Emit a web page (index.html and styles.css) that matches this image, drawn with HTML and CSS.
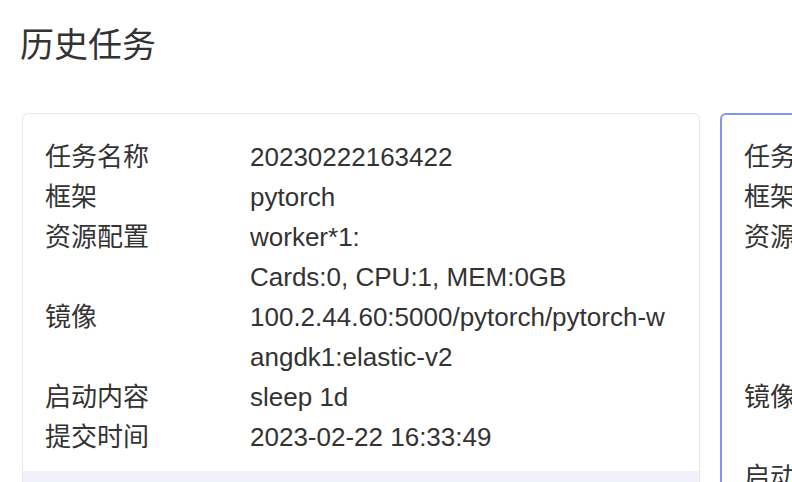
FILE: index.html
```html
<!DOCTYPE html>
<html lang="zh-CN">
<head>
<meta charset="utf-8">
<title>历史任务</title>
<link rel="stylesheet" href="styles.css">
</head>
<body>
<div class="page">
  <h1 class="title">历史任务</h1>
  <div class="cards">
    <div class="card">
      <div class="card-body">
        <div class="row"><div class="label">任务名称</div><div class="value">20230222163422</div></div>
        <div class="row"><div class="label">框架</div><div class="value">pytorch</div></div>
        <div class="row"><div class="label">资源配置</div><div class="value"><div>worker*1:</div><div>Cards:0, CPU:1, MEM:0GB</div></div></div>
        <div class="row"><div class="label">镜像</div><div class="value">100.2.44.60:5000/pytorch/pytorch-wangdk1:elastic-v2</div></div>
        <div class="row"><div class="label">启动内容</div><div class="value">sleep 1d</div></div>
        <div class="row"><div class="label">提交时间</div><div class="value">2023-02-22 16:33:49</div></div>
      </div>
      <div class="card-footer"></div>
    </div>
    <div class="card card-active">
      <div class="card-body">
        <div class="row"><div class="label">任务名称</div><div class="value">20230222150311</div></div>
        <div class="row"><div class="label">框架</div><div class="value">pytorch</div></div>
        <div class="row"><div class="label">资源配置</div><div class="value"><div>master*1:</div><div>Cards:0, CPU:1, MEM:0GB</div><div>worker*1:</div><div>Cards:0, CPU:1, MEM:0GB</div></div></div>
        <div class="row"><div class="label">镜像</div><div class="value">100.2.44.60:5000/pytorch/pytorch-wangdk1:elastic-v2</div></div>
        <div class="row"><div class="label">启动内容</div><div class="value">sleep 1d</div></div>
        <div class="row"><div class="label">提交时间</div><div class="value">2023-02-22 15:03:11</div></div>
      </div>
      <div class="card-footer"></div>
    </div>
  </div>
</div>
</body>
</html>
```

FILE: styles.css
```css
html, body {
  margin: 0;
  padding: 0;
  background: #ffffff;
}
body {
  font-family: "Liberation Sans", Arial, "Noto Sans CJK SC", sans-serif;
  color: #333333;
  overflow: hidden;
  width: 792px;
  height: 482px;
}
.page {
  padding: 21px 0 0 20px;
}
.title {
  margin: 0;
  font-size: 34px;
  font-weight: normal;
  line-height: 48px;
  color: #333333;
}
.cards {
  display: flex;
  gap: 20px;
  margin-top: 44px;
  padding-left: 2px;
}
.card {
  flex: 0 0 678px;
  width: 678px;
  box-sizing: border-box;
  border: 1px solid #e6e8ee;
  border-radius: 6px;
  background: #ffffff;
  overflow: hidden;
}
.card-active {
  border: 2px solid #8097f2;
}
.card-body {
  padding: 23px 22px 14px 22px;
}
.card-active .card-body {
  padding: 22px 22px 14px 22px;
}
.row {
  display: flex;
  font-size: 26px;
  line-height: 40px;
}
.label {
  flex: 0 0 205px;
  width: 205px;
}
.value {
  flex: 1;
  min-width: 0;
  word-break: break-all;
}
.card-footer {
  height: 60px;
  background: #f0f1fa;
}
```
